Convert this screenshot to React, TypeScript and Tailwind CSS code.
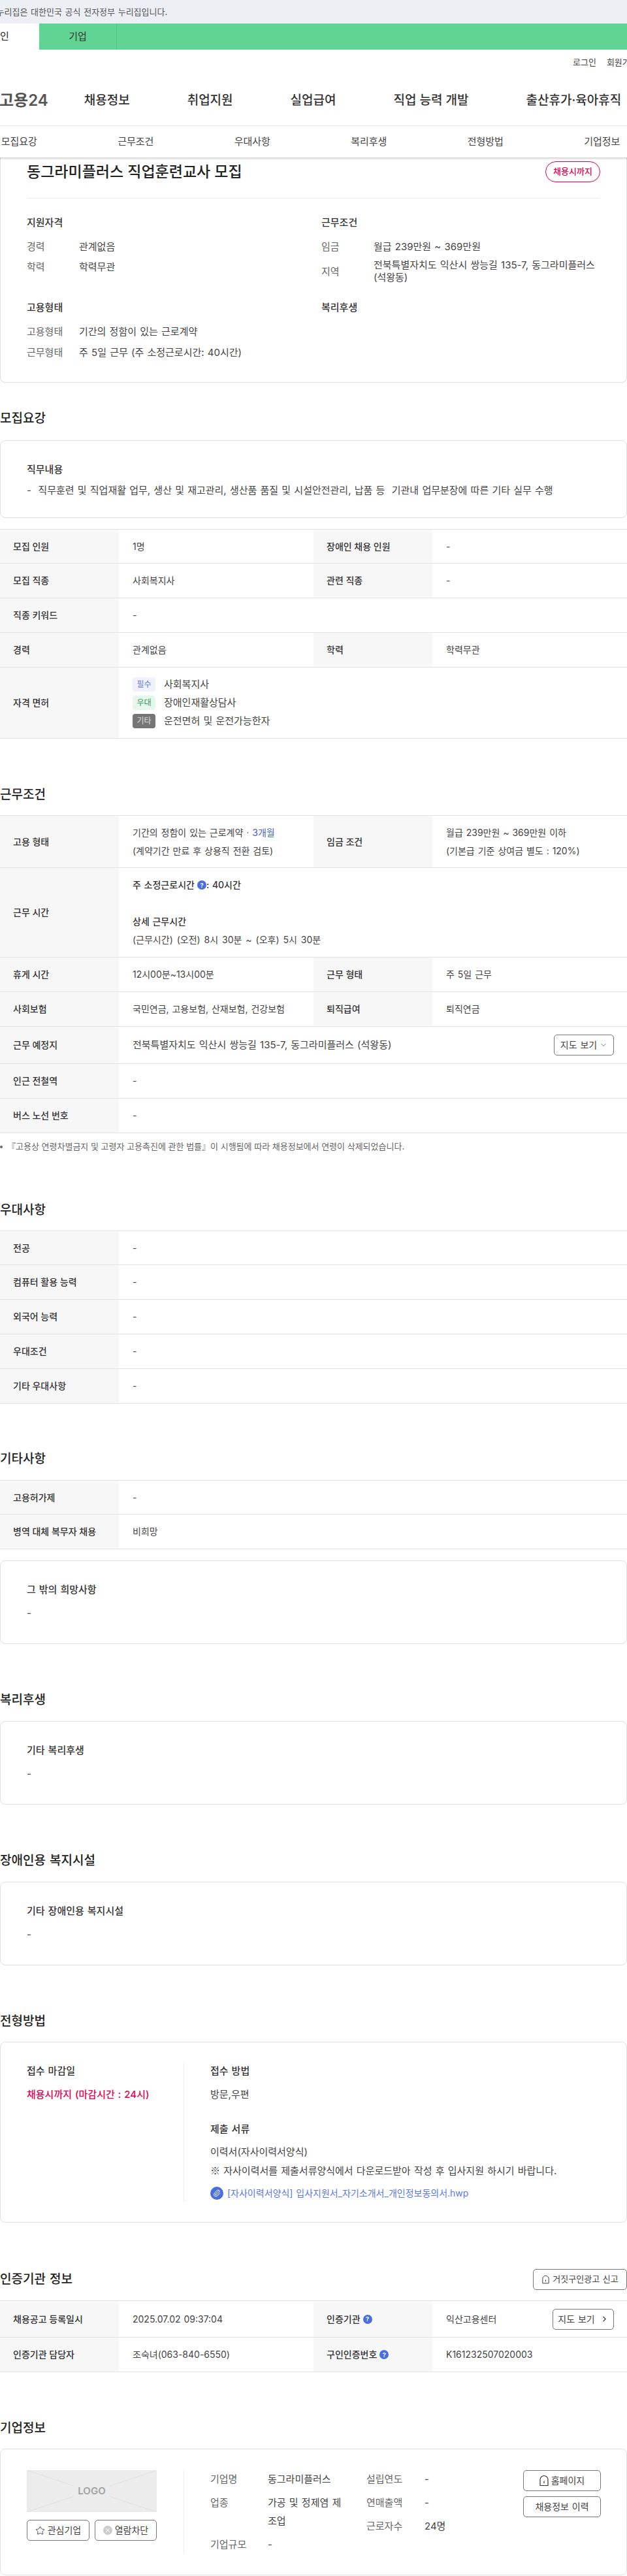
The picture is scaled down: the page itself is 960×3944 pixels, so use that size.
import React from 'react';
import { ChevronDown, ChevronRight, Paperclip, Star, X } from "lucide-react";

const subTabs = ['모집요강', '근무조건', '우대사항', '복리후생', '전형방법', '기업정보'];
const mainNav = ['채용정보', '취업지원', '실업급여', '직업 능력 개발', '출산휴가·육아휴직'];

const Heading = ({ children, className = '' }: { children: React.ReactNode; className?: string }) => (
  <h2 className={`h-8 leading-8 text-[19px] font-medium text-[#222] whitespace-nowrap ${className}`}>{children}</h2>
);

const Help = () => (
  <span className="inline-flex h-[14px] w-[14px] items-center justify-center rounded-full bg-[#4a6ee0] text-[9px] font-bold leading-none text-white">?</span>
);

const Row = ({ h, children }: { h: string; children: React.ReactNode }) => (
  <div className={`flex border-b border-[#e2e2e2] ${h}`}>{children}</div>
);

const Th = ({ children }: { children: React.ReactNode }) => (
  <div className="flex w-[182px] shrink-0 items-center gap-1 bg-[#f7f7f7] pl-5 text-sm font-medium text-[#333] [word-spacing:0]">{children}</div>
);

const Td = ({ children, half }: { children: React.ReactNode; half?: boolean }) => (
  <div className={`flex items-center pl-[21px] text-sm text-[#444] ${half ? 'w-[298px] shrink-0' : 'flex-1'}`}>{children}</div>
);

const Table = ({ children, className = '' }: { children: React.ReactNode; className?: string }) => (
  <div className={`border-t border-[#e2e2e2] ${className}`}>{children}</div>
);

const Card = ({ children, className = '' }: { children: React.ReactNode; className?: string }) => (
  <div className={`rounded-lg border border-[#e0e0e0] bg-white px-10 ${className}`}>{children}</div>
);

const InfoRow = ({ label, children, tall }: { label: string; children: React.ReactNode; tall?: boolean }) => (
  <div className={`flex items-center text-[15px] ${tall ? 'mt-[6px] leading-[19px]' : 'h-6 leading-6'}`}>
    <span className="w-20 shrink-0 text-[#666]">{label}</span>
    <span className="text-[#444]">{children}</span>
  </div>
);

const TextCard = ({ title, className = '' }: { title: string; className?: string }) => (
  <Card className={`h-[128px] pt-[32px] ${className}`}>
    <div className="h-6 text-[15px] font-medium leading-6 text-[#333]">{title}</div>
    <div className="mt-3 h-6 text-[15px] leading-6 text-[#444]">-</div>
  </Card>
);

const DomeIcon = ({ className = '' }: { className?: string }) => (
  <svg viewBox="0 0 14 18" className={className} fill="none" stroke="#333" strokeWidth="1.2">
    <path d="M1 16.5V7.5C1 4 4 1.5 7 1.5C10 1.5 13 4 13 7.5V16.5Z" strokeLinejoin="round" />
    <path d="M7 9.5V13" />
  </svg>
);

const OutlineButton = ({ children, className = '' }: { children: React.ReactNode; className?: string }) => (
  <div className={`flex items-center justify-center rounded-[5px] border border-[#777] bg-white text-[#444] ${className}`}>{children}</div>
);

export default function App() {
  return (
    <div className="h-[3944px] w-[960px] overflow-hidden bg-white font-['Inter','Noto_Sans_CJK_KR',sans-serif] [word-spacing:1px]">
      {/* top bars */}
      <div className="h-9 overflow-hidden whitespace-nowrap bg-[#ecf0f5] text-[13px] leading-9 text-[#555]">
        <span className="-ml-[22px] inline-block">이 누리집은 대한민국 공식 전자정부 누리집입니다.</span>
      </div>
      <div className="flex h-10 bg-[#60d493] text-[15px] leading-10">
        <div className="-ml-[60px] w-[120px] bg-white text-center text-[#222]">개인</div>
        <div className="w-[119px] border-r border-[#52c584] text-center text-[#333]">기업</div>
      </div>

      {/* header */}
      <div className="h-[117px] border-b border-[#e8e8e8]">
        <div className="flex h-10 items-center gap-4 whitespace-nowrap pl-[877px] text-[13px] text-[#444]">
          <span>로그인</span>
          <span>회원가입</span>
        </div>
        <div className="mt-[18px] flex h-10 items-center whitespace-nowrap [word-spacing:0]">
          <span className="-ml-[1px] mr-[55px] text-2xl font-semibold text-[#555]">고용24</span>
          <div className="flex gap-[88px] text-[19px] font-medium text-[#333]">
            {mainNav.map((item) => (
              <span key={item}>{item}</span>
            ))}
          </div>
        </div>
      </div>
      <div className="relative z-10 -ml-[60px] flex h-12 w-[1080px] items-center bg-white text-[15px] text-[#444] shadow-[0_2px_3px_rgba(0,0,0,0.18)]">
        {subTabs.map((tab) => (
          <div key={tab} className="w-[178.5px] text-center">{tab}</div>
        ))}
      </div>

      {/* summary */}
      <div className="h-[345px] rounded-b-lg border-x border-b border-[#e0e0e0] px-10 pt-[6px]">
        <div className="flex h-8 items-center justify-between">
          <h1 className="text-[23px] font-medium text-[#222] [word-spacing:0]">동그라미플러스 직업훈련교사 모집</h1>
          <span className="flex h-8 w-[84px] items-center justify-center rounded-full border border-[#e4004f] text-[13px] font-medium text-[#e4004f]">채용시까지</span>
        </div>
        <div className="mt-6 border-t border-[#ebebeb]" />
        <div className="mt-[25px] grid grid-cols-[451px_1fr] gap-y-[25px]">
          <div>
            <div className="h-6 text-[15px] font-medium leading-6 text-[#333]">지원자격</div>
            <div className="mt-[13px] space-y-[7px]">
              <InfoRow label="경력">관계없음</InfoRow>
              <InfoRow label="학력">학력무관</InfoRow>
            </div>
          </div>
          <div>
            <div className="h-6 text-[15px] font-medium leading-6 text-[#333]">근무조건</div>
            <div className="mt-[13px]">
              <InfoRow label="임금">월급 239만원 ~ 369만원</InfoRow>
              <InfoRow label="지역" tall>전북특별자치도 익산시 쌍능길 135-7, 동그라미플러스 (석왕동)</InfoRow>
            </div>
          </div>
          <div>
            <div className="h-6 text-[15px] font-medium leading-6 text-[#333]">고용형태</div>
            <div className="mt-[13px] space-y-2">
              <InfoRow label="고용형태">기간의 정함이 있는 근로계약</InfoRow>
              <InfoRow label="근무형태">주 5일 근무 (주 소정근로시간: 40시간)</InfoRow>
            </div>
          </div>
          <div className="h-6 text-[15px] font-medium leading-6 text-[#333]">복리후생</div>
        </div>
      </div>

      {/* 모집요강 */}
      <Heading className="mt-[39px]">모집요강</Heading>
      <Card className="mt-[17px] h-[119px] pt-[32px]">
        <div className="h-6 text-[15px] font-medium leading-6 text-[#333]">직무내용</div>
        <div className="mt-2 h-6 whitespace-pre text-[15px] leading-6 text-[#444]">-  직무훈련 및 직업재활 업무, 생산 및 재고관리, 생산품 품질 및 시설안전관리, 납품 등  기관내 업무분장에 따른 기타 실무 수행</div>
      </Card>
      <Table className="mt-[17px]">
        <Row h="h-[52px]"><Th>모집 인원</Th><Td half>1명</Td><Th>장애인 채용 인원</Th><Td>-</Td></Row>
        <Row h="h-[53px]"><Th>모집 직종</Th><Td half>사회복지사</Td><Th>관련 직종</Th><Td>-</Td></Row>
        <Row h="h-[53px]"><Th>직종 키워드</Th><Td>-</Td></Row>
        <Row h="h-[53px]"><Th>경력</Th><Td half>관계없음</Td><Th>학력</Th><Td>학력무관</Td></Row>
        <Row h="h-[109px]">
          <Th>자격 면허</Th>
          <Td>
            <div className="space-y-[6px]">
              <div className="flex h-[22px] items-center gap-[13px] text-[15px]">
                <span className="flex h-[22px] w-[35px] items-center justify-center rounded bg-[#f0f2ff] text-xs text-[#6a7cf0]">필수</span>
                사회복지사
              </div>
              <div className="flex h-[22px] items-center gap-[13px] text-[15px]">
                <span className="flex h-[22px] w-[35px] items-center justify-center rounded bg-[#e8f7ee] text-xs text-[#2e9e5b]">우대</span>
                장애인재활상담사
              </div>
              <div className="flex h-[22px] items-center gap-[13px] text-[15px]">
                <span className="flex h-[22px] w-[35px] items-center justify-center rounded bg-[#767676] text-xs text-[#ddd]">기타</span>
                운전면허 및 운전가능한자
              </div>
            </div>
          </Td>
        </Row>
      </Table>

      {/* 근무조건 */}
      <Heading className="mt-[70px]">근무조건</Heading>
      <Table className="mt-[15px]">
        <Row h="h-20">
          <Th>고용 형태</Th>
          <Td half>
            <div className="leading-7">
              기간의 정함이 있는 근로계약 <span className="text-[#3f63dd]">· 3개월</span>
              <br />
              (계약기간 만료 후 상용직 전환 검토)
            </div>
          </Td>
          <Th>임금 조건</Th>
          <Td>
            <div className="leading-7">
              월급 239만원 ~ 369만원 이하
              <br />
              (기본급 기준 상여금 별도 : 120%)
            </div>
          </Td>
        </Row>
        <Row h="h-[137px]">
          <Th>근무 시간</Th>
          <Td>
            <div className="leading-7">
              <div className="flex h-7 items-center gap-1 font-medium text-[#333]">주 소정근로시간 <Help /><span className="-ml-1">: 40시간</span></div>
              <div className="mt-7 h-7 font-medium text-[#333]">상세 근무시간</div>
              <div className="h-7 [word-spacing:2px]">(근무시간) (오전) 8시 30분 ~ (오후) 5시 30분</div>
            </div>
          </Td>
        </Row>
        <Row h="h-[53px]"><Th>휴게 시간</Th><Td half>12시00분~13시00분</Td><Th>근무 형태</Th><Td>주 5일 근무</Td></Row>
        <Row h="h-[53px]"><Th>사회보험</Th><Td half>국민연금, 고용보험, 산재보험, 건강보험</Td><Th>퇴직급여</Th><Td>퇴직연금</Td></Row>
        <Row h="h-[57px]">
          <Th>근무 예정지</Th>
          <Td>
            <div className="flex w-full items-center justify-between pr-5">
              <span className="text-[15px]">전북특별자치도 익산시 쌍능길 135-7, 동그라미플러스 (석왕동)</span>
              <OutlineButton className="h-8 w-[92px] gap-1 text-sm">
                지도 보기 <ChevronDown size={12} strokeWidth={1.5} />
              </OutlineButton>
            </div>
          </Td>
        </Row>
        <Row h="h-[53px]"><Th>인근 전철역</Th><Td>-</Td></Row>
        <Row h="h-[53px]"><Th>버스 노선 번호</Th><Td>-</Td></Row>
      </Table>
      <div className="mt-[10px] flex h-[22px] items-center whitespace-nowrap text-[13px] text-[#666] [word-spacing:0]">
        <span className="mr-[7px] h-1 w-1 rounded-full bg-[#666]" />
        『고용상 연령차별금지 및 고령자 고용촉진에 관한 법률』이 시행됨에 따라 채용정보에서 연령이 삭제되었습니다.
      </div>

      {/* 우대사항 */}
      <Heading className="mt-[70px]">우대사항</Heading>
      <Table className="mt-[15px]">
        <Row h="h-[52px]"><Th>전공</Th><Td>-</Td></Row>
        <Row h="h-[53px]"><Th>컴퓨터 활용 능력</Th><Td>-</Td></Row>
        <Row h="h-[53px]"><Th>외국어 능력</Th><Td>-</Td></Row>
        <Row h="h-[53px]"><Th>우대조건</Th><Td>-</Td></Row>
        <Row h="h-[53px]"><Th>기타 우대사항</Th><Td>-</Td></Row>
      </Table>

      {/* 기타사항 */}
      <Heading className="mt-[69px]">기타사항</Heading>
      <Table className="mt-4">
        <Row h="h-[52px]"><Th>고용허가제</Th><Td>-</Td></Row>
        <Row h="h-[53px]"><Th>병역 대체 복무자 채용</Th><Td>비희망</Td></Row>
      </Table>
      <TextCard title="그 밖의 희망사항" className="mt-[17px]" />

      <Heading className="mt-[70px]">복리후생</Heading>
      <TextCard title="기타 복리후생" className="mt-4" />

      <Heading className="mt-[70px]">장애인용 복지시설</Heading>
      <TextCard title="기타 장애인용 복지시설" className="mt-4" />

      {/* 전형방법 */}
      <Heading className="mt-[70px]">전형방법</Heading>
      <Card className="mt-[15px] flex h-[277px] pt-[32px]">
        <div className="w-[240px] shrink-0 text-[15px]">
          <div className="h-6 font-medium leading-6 text-[#333]">접수 마감일</div>
          <div className="mt-[10px] h-7 font-medium leading-7 text-[#e4004f]">채용시까지 (마감시간 : 24시)</div>
        </div>
        <div className="h-[212px] border-l border-[#ebebeb] pl-10 text-[15px] leading-7 text-[#444]">
          <div className="h-6 font-medium leading-6 text-[#333]">접수 방법</div>
          <div className="mt-[10px] h-7">방문,우편</div>
          <div className="mt-[27px] h-6 font-medium leading-6 text-[#333]">제출 서류</div>
          <div className="mt-[9px] h-7">이력서(자사이력서양식)</div>
          <div className="h-7"><span className="font-['Noto_Sans_CJK_KR',sans-serif]">※</span> 자사이력서를 제출서류양식에서 다운로드받아 작성 후 입사지원 하시기 바랍니다.</div>
          <div className="mt-[11px] flex h-5 items-center gap-[6px] text-sm text-[#5a78e6]">
            <span className="flex h-5 w-5 items-center justify-center rounded-full bg-[#4a6ee0]">
              <Paperclip size={12} color="#fff" strokeWidth={2} />
            </span>
            [자사이력서양식] 입사지원서_자기소개서_개인정보동의서.hwp
          </div>
        </div>
      </Card>

      {/* 인증기관 정보 */}
      <div className="mt-[71px] flex h-8 items-center justify-between">
        <Heading>인증기관 정보</Heading>
        <OutlineButton className="h-8 w-[144px] gap-1 text-[13px]">
          <DomeIcon className="h-[14px] w-[13px]" />
          거짓구인광고 신고
        </OutlineButton>
      </div>
      <Table className="mt-4">
        <Row h="h-14">
          <Th>채용공고 등록일시</Th>
          <Td half>2025.07.02 09:37:04</Td>
          <Th>인증기관 <Help /></Th>
          <Td>
            <div className="flex w-full items-center justify-between pr-5">
              <span>익산고용센터</span>
              <OutlineButton className="h-8 w-[94px] gap-2 text-sm">
                지도 보기 <ChevronRight size={13} strokeWidth={2.5} />
              </OutlineButton>
            </div>
          </Td>
        </Row>
        <Row h="h-[53px]">
          <Th>인증기관 담당자</Th>
          <Td half>조숙녀(063-840-6550)</Td>
          <Th>구인인증번호 <Help /></Th>
          <Td>K161232507020003</Td>
        </Row>
      </Table>

      {/* 기업정보 */}
      <Heading className="mt-[70px]">기업정보</Heading>
      <Card className="mt-[15px] flex h-[194px] pt-[32px]">
        <div className="w-[240px] shrink-0">
          <div className="relative h-16 w-[199px] bg-[#ececec]">
            <svg viewBox="0 0 199 64" className="h-16 w-[199px]" stroke="#e0e0e0" strokeWidth="1">
              <path d="M0 0L72 24M199 0L127 24M0 64L72 40M199 64L127 40" />
            </svg>
            <span className="absolute inset-0 flex items-center justify-center text-[15px] font-semibold text-[#a3a3a3]">LOGO</span>
          </div>
          <div className="mt-3 flex w-[199px] justify-between">
            <OutlineButton className="h-8 w-[96px] gap-1 text-sm">
              <Star size={15} strokeWidth={1.4} color="#333" />
              관심기업
            </OutlineButton>
            <OutlineButton className="h-8 w-[95px] gap-1 text-sm">
              <span className="flex h-[14px] w-[14px] items-center justify-center rounded-full bg-[#ccc]">
                <X size={10} color="#fff" strokeWidth={2.5} />
              </span>
              열람차단
            </OutlineButton>
          </div>
        </div>
        <div className="flex h-32 border-l border-[#ebebeb] pl-10 text-[15px] leading-7 text-[#444]">
          <div className="w-[239px] shrink-0 space-y-2">
            <div className="flex"><span className="w-[88px] shrink-0 text-[#666]">기업명</span><span>동그라미플러스</span></div>
            <div className="flex"><span className="w-[88px] shrink-0 text-[#666]">업종</span><span className="w-[116px]">가공 및 정제염 제조업</span></div>
            <div className="flex"><span className="w-[88px] shrink-0 text-[#666]">기업규모</span><span>-</span></div>
          </div>
          <div className="w-[240px] shrink-0 space-y-2">
            <div className="flex"><span className="w-[89px] shrink-0 text-[#666]">설립연도</span><span>-</span></div>
            <div className="flex"><span className="w-[89px] shrink-0 text-[#666]">연매출액</span><span>-</span></div>
            <div className="flex"><span className="w-[89px] shrink-0 text-[#666]">근로자수</span><span>24명</span></div>
          </div>
          <div className="w-[119px] shrink-0 space-y-2">
            <OutlineButton className="h-8 w-[119px] gap-1 text-sm">
              <DomeIcon className="h-[18px] w-[14px]" />
              홈페이지
            </OutlineButton>
            <OutlineButton className="h-8 w-[119px] text-sm">채용정보 이력</OutlineButton>
          </div>
        </div>
      </Card>
    </div>
  );
}
